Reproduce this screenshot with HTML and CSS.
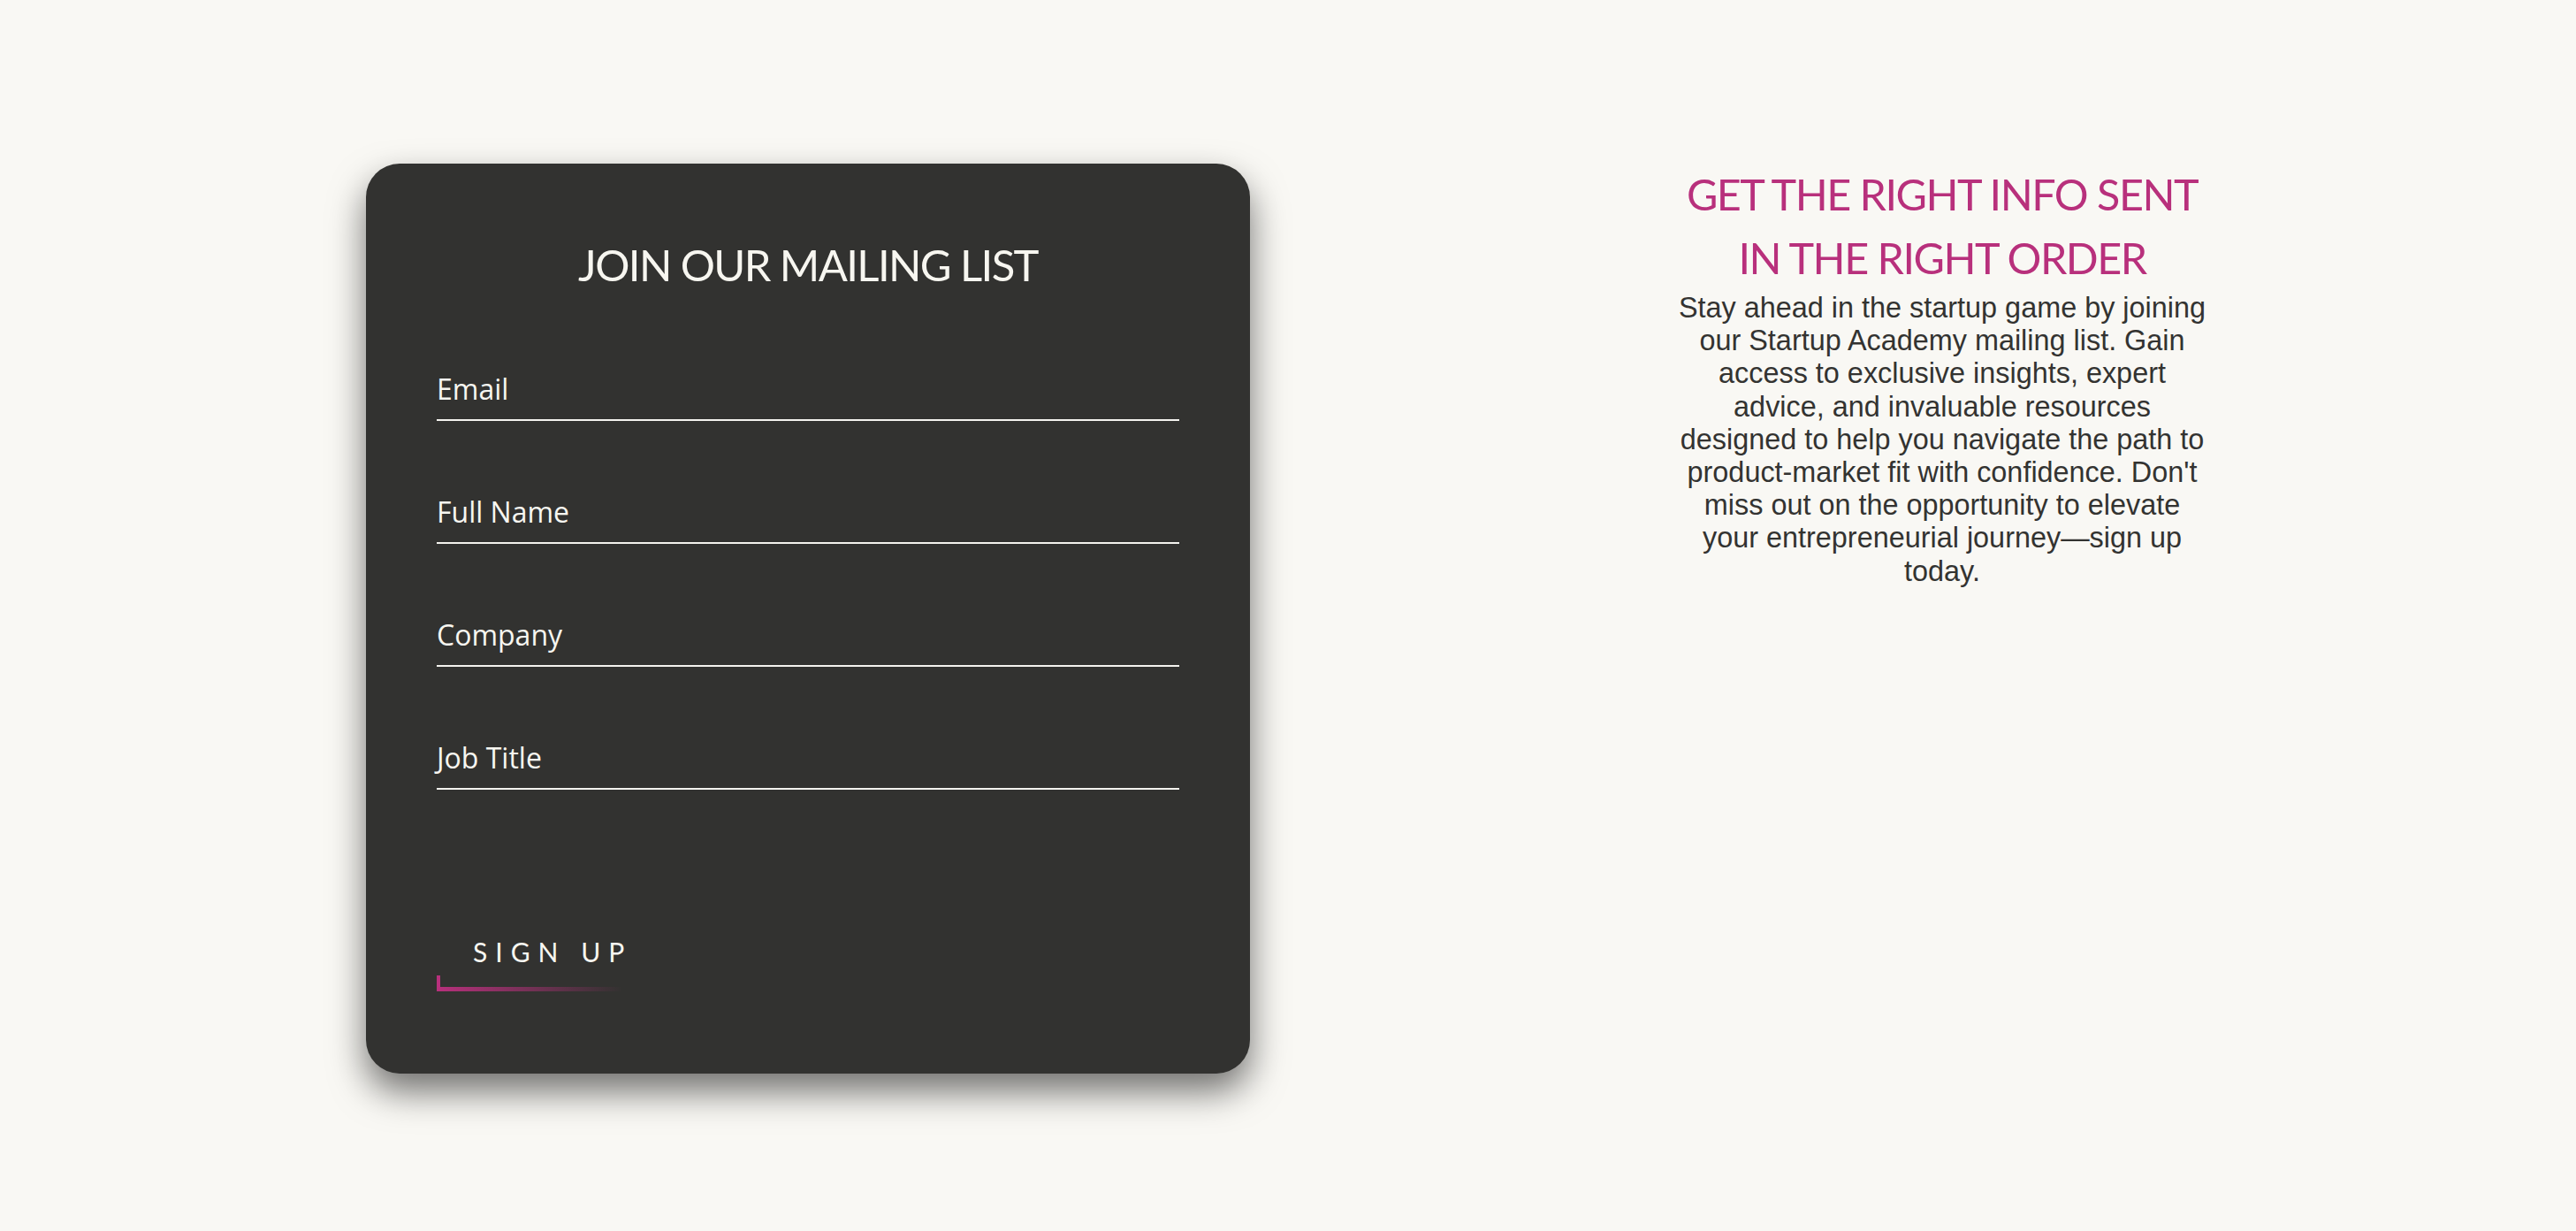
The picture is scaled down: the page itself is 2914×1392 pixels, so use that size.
FILE: index.html
```html
<!DOCTYPE html>
<html lang="en">
<head>
<meta charset="utf-8">
<title>Join our mailing list</title>
<link rel="stylesheet" href="styles.css">
</head>
<body>
<main class="page">
  <section class="card">
    <h2 class="card-title">JOIN OUR MAILING LIST</h2>
    <form class="form">
      <div class="field"><span class="field-label">Email</span></div>
      <div class="field"><span class="field-label">Full Name</span></div>
      <div class="field"><span class="field-label">Company</span></div>
      <div class="field"><span class="field-label">Job Title</span></div>
      <button type="button" class="signup">
        <span class="signup-text">SIGN UP</span>
        <span class="signup-line"></span>
      </button>
    </form>
  </section>
  <section class="info">
    <h2 class="info-title">GET THE RIGHT INFO SENT IN THE RIGHT ORDER</h2>
    <p class="info-text">Stay ahead in the startup game by joining our Startup Academy mailing list. Gain access to exclusive insights, expert advice, and invaluable resources designed to help you navigate the path to product-market fit with confidence. Don't miss out on the opportunity to elevate your entrepreneurial journey—sign up today.</p>
  </section>
</main>
</body>
</html>
```

FILE: styles.css
```css
html, body {
  margin: 0;
  padding: 0;
}
body {
  background: #f9f8f4;
  font-family: "Lato", "Liberation Sans", sans-serif;
  width: 2914px;
  height: 1392px;
  overflow: hidden;
}
.page {
  display: flex;
  align-items: flex-start;
  gap: 478px;
  padding: 185px 0 0 414px;
}
.card {
  box-sizing: border-box;
  width: 1000px;
  background: #323230;
  border-radius: 38px;
  padding: 84px 80px 93px;
  box-shadow: 0 20px 40px rgba(0, 0, 0, 0.55);
  color: #f7f6f0;
}
.card-title {
  margin: 0 0 8px;
  text-align: center;
  font-family: "Lato", sans-serif;
  font-weight: 400;
  font-size: 49px;
  line-height: 60px;
  letter-spacing: -1.6px;
}
.form {
  display: flex;
  flex-direction: column;
  align-items: stretch;
}
.field {
  padding: 83px 0 14px;
  border-bottom: 2px solid #f4f3ee;
}
.field-label {
  display: block;
  font-family: "Open Sans", "Lato", sans-serif;
  font-weight: 500;
  font-size: 32px;
  line-height: 40px;
  color: #f7f6f0;
}
.signup {
  margin-top: 165px;
  align-self: flex-start;
  background: none;
  border: 0;
  padding: 0;
  display: flex;
  flex-direction: column;
  align-items: flex-start;
  gap: 9px;
  cursor: pointer;
}
.signup-text {
  margin-left: 41px;
  font-family: "Lato", sans-serif;
  font-size: 30px;
  line-height: 36px;
  letter-spacing: 9px;
  color: #f7f6f0;
}
.signup-line {
  display: block;
  width: 210px;
  height: 18px;
  background:
    linear-gradient(90deg, #b8307c 0%, rgba(184, 48, 124, 0.55) 45%, rgba(184, 48, 124, 0) 100%) left bottom / 100% 5px no-repeat,
    linear-gradient(#b8307c, #b8307c) left top / 4px 100% no-repeat;
}
.info {
  width: 610px;
  margin-top: -2px;
  text-align: center;
}
.info-title {
  margin: 0;
  font-family: "Lato", sans-serif;
  font-weight: 400;
  font-size: 48.5px;
  line-height: 72px;
  letter-spacing: -1.5px;
  color: #b8307c;
}
.info-text {
  margin: 3px 0 0;
  font-family: "Liberation Sans", Arial, sans-serif;
  font-size: 32.4px;
  line-height: 37.2px;
  color: #333331;
}
```
